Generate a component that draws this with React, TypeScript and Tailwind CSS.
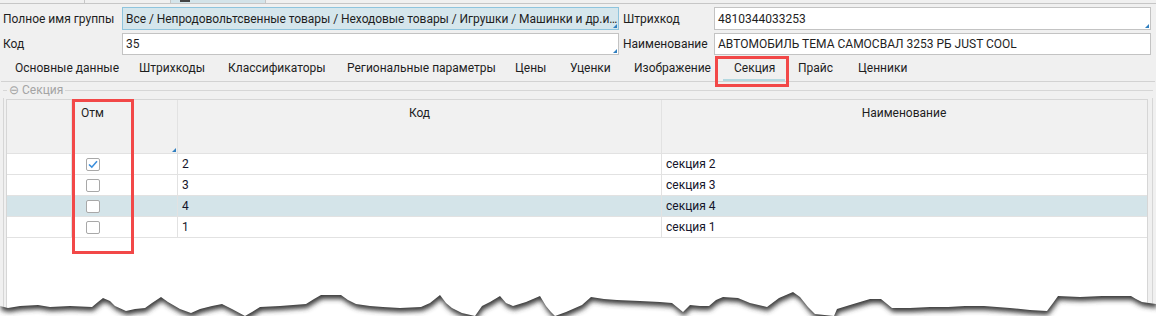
import React from 'react';

const tabs = [
  { label: 'Основные данные', w: 'w-[124px]' },
  { label: 'Штрихкоды', w: 'w-[89px]' },
  { label: 'Классификаторы', w: 'w-[119px]' },
  { label: 'Региональные параметры', w: 'w-[168px]' },
  { label: 'Цены', w: 'w-[55px]' },
  { label: 'Уценки', w: 'w-[64px]' },
  { label: 'Изображение', w: 'w-[100px]' },
  { label: 'Секция', w: 'w-[64px]', active: true },
  { label: 'Прайс', w: 'w-[60px]' },
  { label: 'Ценники', w: 'w-[85px]' },
];

const rows = [
  { code: '2', name: 'секция 2', checked: true },
  { code: '3', name: 'секция 3' },
  { code: '4', name: 'секция 4', selected: true },
  { code: '1', name: 'секция 1' },
];

// torn paper edge, absolute page coords
const edge: [number, number][] = [
  [0, 306], [8, 308], [20, 306], [38, 305], [50, 307], [70, 306], [92, 307], [98, 302],
  [103, 298], [110, 301], [115, 306], [126, 311], [135, 309], [145, 308], [152, 303],
  [161, 297], [168, 302], [180, 309], [191, 313], [200, 309], [212, 306], [222, 304],
  [232, 309], [245, 316], [252, 312], [260, 307], [280, 306], [306, 304], [314, 299],
  [321, 295], [330, 295], [341, 295], [348, 300], [356, 304], [370, 306], [383, 307],
  [400, 308], [421, 307], [430, 303], [440, 295], [446, 303], [452, 308], [462, 313],
  [475, 316], [482, 306], [490, 302], [500, 296], [506, 303], [513, 306], [526, 302],
  [540, 296], [546, 306], [551, 312], [555, 316], [566, 312], [582, 305], [591, 297],
  [604, 299], [617, 300], [640, 301], [660, 302], [672, 303], [683, 312], [690, 305],
  [700, 306], [709, 306], [716, 300], [723, 297], [738, 298], [750, 303], [767, 307],
  [779, 298], [793, 292], [800, 297], [808, 307], [815, 314], [834, 316], [837, 309],
  [850, 305], [870, 299], [881, 299], [892, 308], [910, 308], [930, 307], [948, 307],
  [965, 306], [984, 306], [1010, 308], [1030, 310], [1047, 311], [1053, 303], [1058, 296],
  [1080, 297], [1102, 296], [1120, 296], [1131, 296], [1136, 299], [1142, 302], [1156, 304],
];

function TornEdge() {
  const top = 270;
  const pts = edge.map(([x, y]) => `${x},${y - top}`).join(' L');
  const bottom = `M0,46 L${pts} L1156,46 Z`;
  const upper = `M0,-20 L${pts} L1156,-20 Z`;
  return (
    <svg className="absolute left-0 top-[270px]" width="1156" height="46" viewBox="0 0 1156 46">
      <defs>
        <clipPath id="below">
          <path d={bottom} />
        </clipPath>
        <filter id="soft" x="-5%" y="-50%" width="110%" height="200%">
          <feGaussianBlur stdDeviation="2.4" />
        </filter>
      </defs>
      <g clipPath="url(#below)">
        <rect x="0" y="0" width="1156" height="46" fill="#ffffff" />
        <path d={upper} fill="#3a3a3a" filter="url(#soft)" transform="translate(1,4)" />
      </g>
    </svg>
  );
}

function Corner() {
  return (
    <svg className="absolute right-[1px] bottom-[1px]" width="4" height="4" viewBox="0 0 4 4">
      <path d="M4 0 L4 4 L0 4 Z" fill="#2f7fc0" />
    </svg>
  );
}

function Checkbox({ checked }: { checked?: boolean }) {
  return (
    <div className="w-[14px] h-[13px] rounded-[2px] border border-[#a8a8a8] bg-white flex items-center justify-center">
      {checked && (
        <svg width="10" height="9" viewBox="0 0 10 9">
          <path d="M1 4.5 L3.8 7.2 L9 1.2" fill="none" stroke="#3d8fdc" strokeWidth="1.6" />
        </svg>
      )}
    </div>
  );
}

export default function App() {
  return (
    <div className="relative w-[1156px] h-[316px] overflow-hidden bg-[#f0f0f0] text-[12px] text-[#1e1e1e] font-['Roboto',sans-serif] flex flex-col">
      {/* leftover window tabs */}
      <div className="flex h-[4px] border-b border-[#c6c6c6]">
        <div className="w-[85px] border-r border-[#c6c6c6]" />
        <div className="w-[86px] border-r border-[#c6c6c6]" />
        <div className="w-[95px] border-r border-[#c6c6c6] bg-[#d4e4ea] pl-[9px]">
          <div className="w-[10px] h-[2px] bg-[#444]" />
        </div>
      </div>

      {/* header fields */}
      <div className="grid grid-cols-[119px_497px_95px_437px] grid-rows-[23px_22px] gap-y-[3px] pl-[3px] pt-[3px] items-center">
        <div className="whitespace-nowrap">Полное имя группы</div>
        <div className="relative h-full border border-[#8ec4dd] bg-[#d5e6ec] pl-[3px] flex items-center overflow-hidden whitespace-nowrap tracking-[-0.05px]">
          Все / Непродовольтсвенные товары / Неходовые товары / Игрушки / Машинки и др.и…
          <Corner />
        </div>
        <div className="pl-[4px]">Штрихкод</div>
        <div className="relative h-full border border-[#c3c3c3] bg-white pl-[3px] flex items-center">
          4810344033253
          <Corner />
        </div>

        <div>Код</div>
        <div className="relative h-full border border-[#c3c3c3] bg-white pl-[3px] flex items-center">
          35
          <Corner />
        </div>
        <div className="pl-[4px]">Наименование</div>
        <div className="h-full border border-[#c3c3c3] bg-white pl-[3px] flex items-center whitespace-nowrap">
          АВТОМОБИЛЬ ТЕМА САМОСВАЛ 3253 РБ JUST COOL
        </div>
      </div>

      {/* tabs */}
      <div className="mt-[2px] flex h-[25px] pl-[2px] border-b border-[#d2d2d2] mx-[1px]">
        {tabs.map((t) => (
          <div key={t.label} className={`${t.w} flex flex-col`}>
            <div className="flex-1 flex items-center pl-[12px] whitespace-nowrap">{t.label}</div>
            <div className={`h-[2px] mx-[1px] ${t.active ? 'bg-[#b3d8e0]' : ''}`} />
          </div>
        ))}
      </div>

      {/* group box */}
      <div className="flex-1 flex flex-col mx-[3px]">
        <div className="flex items-center h-[16px]">
          <div className="w-[4px] h-px bg-[#d6d6d6]" />
          <div className="px-[2px] text-[#a4a4a4] whitespace-nowrap">⊖ Секция</div>
          <div className="flex-1 h-px bg-[#d6d6d6]" />
        </div>
        <div className="flex-1 flex flex-col border-l border-r border-[#d6d6d6] pl-[2px] pr-[4px] pt-[1px]">
          <div className="flex-1 flex flex-col bg-white border-l border-r border-t border-[#d6d6d6]">
            {/* header */}
            <div className="grid grid-cols-[65px_106px_484px_484px] h-[54px] bg-[#f1f1f1] border-b border-[#e2e2e2]">
              <div className="border-r border-[#e2e2e2]" />
              <div className="relative border-r border-[#e2e2e2] pl-[9px] pt-[4px]">
                Отм
                <svg className="absolute right-[1px] bottom-[1px]" width="4" height="4" viewBox="0 0 4 4">
                  <path d="M4 0 L4 4 L0 4 Z" fill="#2f7fc0" />
                </svg>
              </div>
              <div className="border-r border-[#e2e2e2] text-center pt-[4px]">Код</div>
              <div className="text-center pt-[4px]">Наименование</div>
            </div>
            {/* rows */}
            {rows.map((r) => (
              <div
                key={r.code}
                className={`grid grid-cols-[65px_106px_484px_484px] h-[21px] border-b border-[#e2e2e2] ${r.selected ? 'bg-[#d4e4e9]' : 'bg-white'}`}
              >
                <div className="border-r border-[#e2e2e2]" />
                <div className="border-r border-[#e2e2e2] flex items-center pl-[14px]">
                  <Checkbox checked={r.checked} />
                </div>
                <div className="border-r border-[#e2e2e2] flex items-center pl-[4px] text-[#14142a]">{r.code}</div>
                <div className="flex items-center pl-[4px] text-[#14142a]">{r.name}</div>
              </div>
            ))}
          </div>
        </div>
      </div>

      {/* annotation boxes */}
      <div className="absolute left-[715px] top-[56px] w-[74px] h-[31px] border-[3px] border-[#f24848]" />
      <div className="absolute left-[72px] top-[99px] w-[62px] h-[155px] border-[3px] border-[#f24848]" />

      <TornEdge />
    </div>
  );
}
